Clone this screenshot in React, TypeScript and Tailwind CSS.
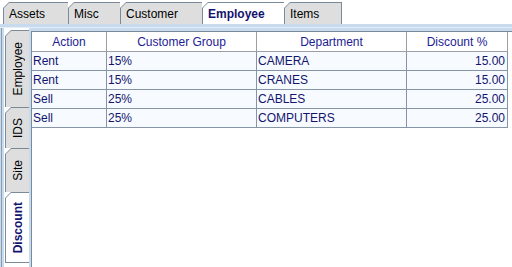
import React from 'react'

type Tab = { label: string; w: string; selected?: boolean; last?: boolean }

const topTabs: Tab[] = [
  { label: 'Assets', w: 'w-[65px]' },
  { label: 'Misc', w: 'w-[52px]' },
  { label: 'Customer', w: 'w-[82px]' },
  { label: 'Employee', w: 'w-[82px]', selected: true },
  { label: 'Items', w: 'w-[58px]', last: true },
]

const sideTabs: Tab[] = [
  { label: 'Employee', w: 'h-[77px]' },
  { label: 'IDS', w: 'h-[41px]' },
  { label: 'Site', w: 'h-[44px]' },
  { label: 'Discount', w: 'h-[71px]', selected: true, last: true },
]

const rows = [
  { action: 'Rent', group: '15%', dept: 'CAMERA', discount: '15.00' },
  { action: 'Rent', group: '15%', dept: 'CRANES', discount: '15.00' },
  { action: 'Sell', group: '25%', dept: 'CABLES', discount: '25.00' },
  { action: 'Sell', group: '25%', dept: 'COMPUTERS', discount: '25.00' },
]

function TopTab({ tab }: { tab: Tab }) {
  return (
    <div
      className={`h-[22px] pt-px pl-px ${tab.last ? 'pr-px' : ''} bg-[#7a8a99] [clip-path:polygon(6px_0,100%_0,100%_100%,0_100%,0_6px)] ${tab.w}`}
    >
      <div
        className={`flex h-full items-center pl-[5px] [clip-path:polygon(5px_0,100%_0,100%_100%,0_100%,0_5px)] ${
          tab.selected ? 'bg-white font-bold text-[#14146e]' : 'bg-[#dedede] text-black'
        }`}
      >
        {tab.label}
      </div>
    </div>
  )
}

function SideTab({ tab }: { tab: Tab }) {
  return (
    <div
      className={`w-[24px] pt-px pl-px ${tab.last ? 'pb-px' : ''} bg-[#7a8a99] [clip-path:polygon(6px_0,100%_0,100%_100%,0_100%,0_6px)] ${tab.w}`}
    >
      <div
        className={`flex h-full w-full items-center justify-center [clip-path:polygon(5px_0,100%_0,100%_100%,0_100%,0_5px)] ${
          tab.selected ? 'bg-white font-bold text-[#14146e]' : 'bg-[#dedede] text-black'
        }`}
      >
        <span className="rotate-180 [writing-mode:vertical-rl]">{tab.label}</span>
      </div>
    </div>
  )
}

export default function App() {
  return (
    <div className="flex h-[267px] w-[512px] flex-col overflow-hidden bg-white text-[12px] leading-none [font-family:'Liberation_Sans',Arial,sans-serif]">
      <div className="flex h-[24px] shrink-0 pl-[3px] pt-[2px]">
        {topTabs.map((t) => (
          <TopTab key={t.label} tab={t} />
        ))}
      </div>

      <div className="h-[4px] shrink-0 border-b border-[#e4eef9] bg-[#c8daee]" />

      <div className="flex flex-1">
        <div className="flex w-[4px] shrink-0">
          <div className="w-px bg-[#c8daee]" />
          <div className="w-px bg-[#8c9cad]" />
          <div className="w-[2px] bg-[#c8daee]" />
        </div>

        <div className="flex w-[25px] shrink-0 flex-col pl-px pt-[2px]">
          {sideTabs.map((t) => (
            <SideTab key={t.label} tab={t} />
          ))}
        </div>

        <div className="flex flex-1 flex-col">
          <div className="h-[3px] bg-[#c8daee]" />
          <div className="flex flex-1">
            <div className="w-[2px] bg-[#c8daee]" />
            <div className="flex-1 border-l border-t border-[#7a8a99]">
              <div className="flex h-[20px] w-[476px] text-[#1c1c94]">
                <div className="flex w-[75px] items-center justify-center border-b border-r border-[#9aa0a6] bg-white shadow-[inset_1px_1px_0_#fff]">Action</div>
                <div className="flex w-[150px] items-center justify-center border-b border-r border-[#9aa0a6] bg-white">Customer Group</div>
                <div className="flex w-[150px] items-center justify-center border-b border-r border-[#9aa0a6] bg-white">Department</div>
                <div className="flex w-[101px] items-center justify-center border-b border-r border-[#9aa0a6] bg-white">Discount %</div>
              </div>
              {rows.map((r, i) => (
                <div key={i} className="flex h-[19px] w-[476px] bg-[#f7fbff] text-[#14146e]">
                  <div className="flex w-[75px] items-center border-b border-r border-[#8595a6] pl-px">{r.action}</div>
                  <div className="flex w-[150px] items-center border-b border-r border-[#8595a6] pl-px">{r.group}</div>
                  <div className="flex w-[150px] items-center border-b border-r border-[#8595a6] pl-px">{r.dept}</div>
                  <div className="flex w-[101px] items-center justify-end border-b border-r border-[#8595a6] pr-[2px]">{r.discount}</div>
                </div>
              ))}
            </div>
          </div>
        </div>
      </div>
    </div>
  )
}
